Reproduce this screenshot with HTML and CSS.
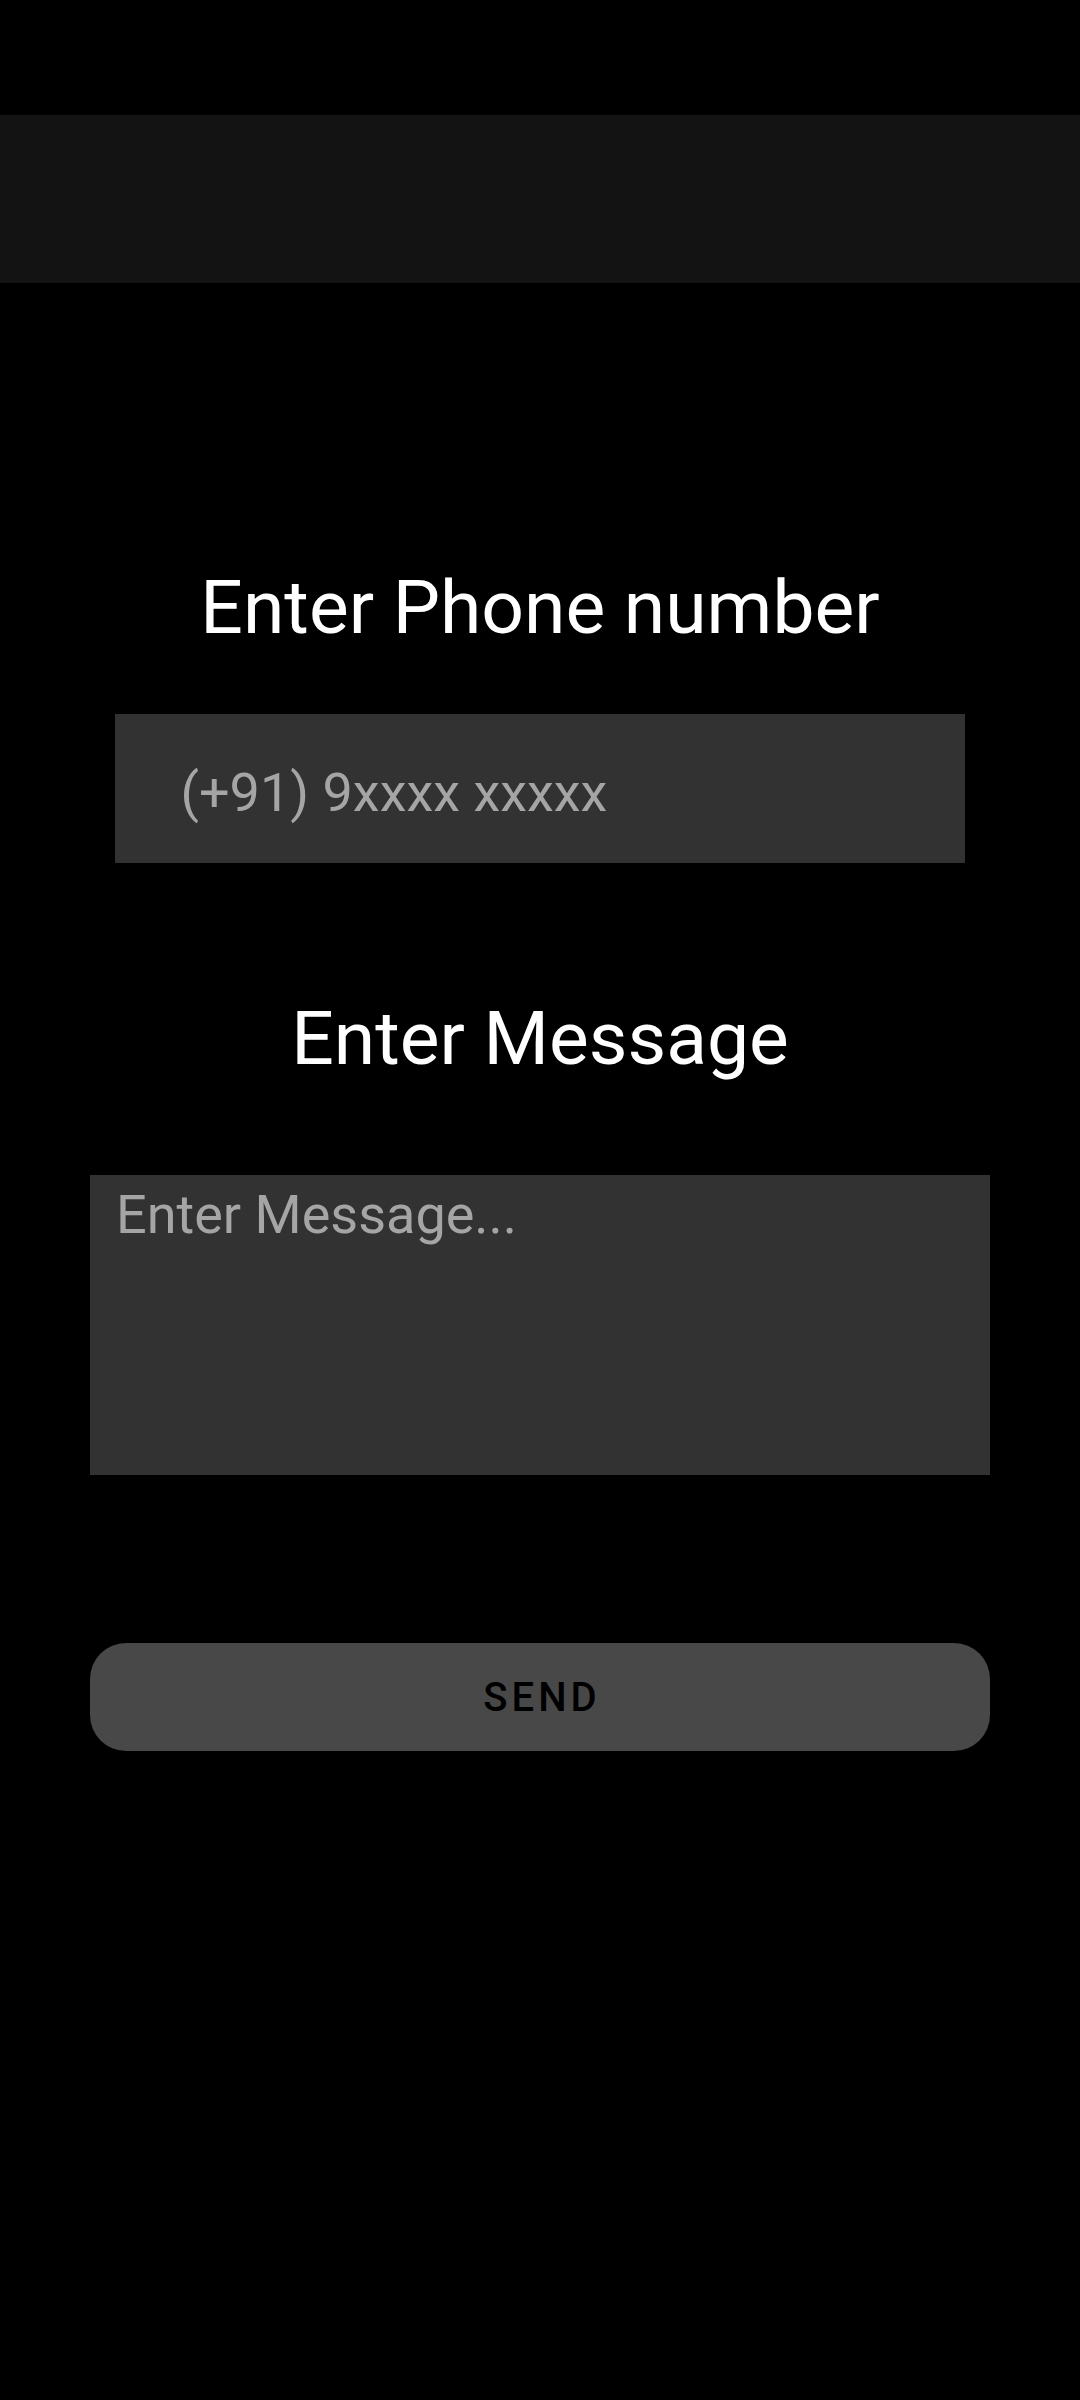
FILE: index.html
```html
<!DOCTYPE html>
<html lang="en">
<head>
<meta charset="utf-8">
<title>Send Message</title>
<link rel="stylesheet" href="styles.css">
</head>
<body>
<div class="status"></div>
<header class="appbar"></header>
<main class="content">
  <h1 class="title title-phone">Enter Phone number</h1>
  <input class="phone" type="tel" placeholder="(+91) 9xxxx xxxxx">
  <h1 class="title title-msg">Enter Message</h1>
  <textarea class="message" placeholder="Enter Message..."></textarea>
  <button class="send" type="button">SEND</button>
</main>
</body>
</html>
```
FILE: styles.css
```css
html, body {
  margin: 0;
  padding: 0;
  background: #000;
}
body {
  width: 1080px;
  height: 2400px;
  font-family: Roboto, "Noto Sans", sans-serif;
  color: #fff;
}
.status {
  height: 115px;
}
.appbar {
  height: 168px;
  background: #131313;
}
.content {
  display: flex;
  flex-direction: column;
  align-items: center;
}
.title {
  margin: 0;
  font-weight: 400;
  font-size: 75px;
  line-height: 88px;
  text-align: center;
  color: #fff;
}
.title-phone {
  margin-top: 280px;
}
.title-msg {
  margin-top: 131px;
}
.phone {
  box-sizing: border-box;
  margin-top: 63px;
  margin-left: -1px;
  width: 850px;
  height: 149px;
  border: 0;
  outline: none;
  background: #323232;
  color: #fff;
  font-family: Roboto, sans-serif;
  font-size: 54px;
  line-height: 63px;
  padding: 47px 0 39px 66px;
}
.phone::placeholder {
  color: #a5a5a5;
}
.message {
  box-sizing: border-box;
  margin-top: 93px;
  width: 900px;
  height: 300px;
  border: 0;
  outline: none;
  resize: none;
  background: #323232;
  color: #fff;
  font-family: Roboto, sans-serif;
  font-size: 54px;
  line-height: 63px;
  padding: 8px 26px;
}
.message::placeholder {
  color: #a5a5a5;
}
.send {
  margin-top: 168px;
  width: 900px;
  height: 108px;
  border: 0;
  border-radius: 36px;
  background: #484848;
  color: #000;
  font-family: Roboto, sans-serif;
  font-weight: 500;
  font-size: 40px;
  letter-spacing: 0.1em;
  padding: 0 0 0 4px;
}
```
